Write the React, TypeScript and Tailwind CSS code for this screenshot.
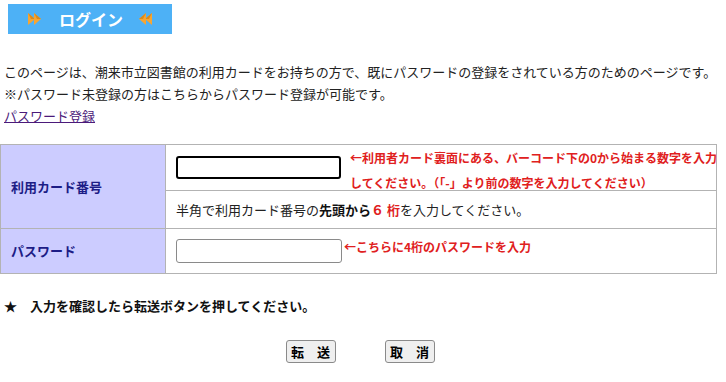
function Arrows({ dir }: { dir: "right" | "left" }) {
  const flip = dir === "left" ? "scale(-1,1) translate(-16,0)" : undefined;
  return (
    <svg width="16" height="14" viewBox="0 0 16 14" className="block">
      <g transform={flip}>
        <polygon points="1,1 8,7 1,13" fill="#f7a531" />
        <polygon points="1,1 8,7 4,7" fill="#d98a1c" />
        <polygon points="7,1 14,7 7,13" fill="#f7a531" />
        <polygon points="7,1 14,7 10,7" fill="#d98a1c" />
      </g>
    </svg>
  );
}

export default function App() {
  return (
    <div className="w-[726px] h-[382px] bg-white text-[13px] text-[#222] font-['Noto_Sans_CJK_JP','Noto_Sans',sans-serif] overflow-hidden">
      <div className="ml-[8px] mt-[4px] w-[164px] h-[30px] bg-[#4db1f6] flex items-center">
        <div className="ml-[19px]"><Arrows dir="right" /></div>
        <span className="ml-[16px] text-white font-bold text-[16px] leading-none">ログイン</span>
        <div className="ml-[14px]"><Arrows dir="left" /></div>
      </div>

      <div className="mt-[27px] pl-[4px] leading-[22px]">
        <p>このページは、潮来市立図書館の利用カードをお持ちの方で、既にパスワードの登録をされている方のためのページです。</p>
        <p>※パスワード未登録の方はこちらからパスワード登録が可能です。</p>
        <p><a href="#" className="text-[#4b1a7a] underline">パスワード登録</a></p>
      </div>

      <table className="mt-[17px] w-[717px] border-collapse border border-[#b3b3b3]">
        <tbody>
          <tr>
            <td rowSpan={2} className="w-[165px] bg-[#ccccff] border border-[#b3b3b3] pl-[10px] font-bold text-[#1c1c86] align-middle">
              利用カード番号
            </td>
            <td className="h-[46px] border border-[#b3b3b3] pl-[10px] pr-0 align-top">
              <div className="flex items-start h-[45px]">
                <input type="text" className="mt-[11px] w-[165px] h-[23px] border-2 border-black rounded-[3px] outline-none shrink-0" />
                <span className="ml-[9px] mr-[-8px] text-[#e02020] font-bold text-[12px] leading-[25px] whitespace-pre-line">
                  {"←利用者カード裏面にある、バーコード下の0から始まる数字を入力\nしてください。（「-」より前の数字を入力してください）"}
                </span>
              </div>
            </td>
          </tr>
          <tr>
            <td className="h-[38px] border border-[#b3b3b3] pl-[10px] align-middle">
              半角で利用カード番号の<b className="text-[#111]">先頭から</b><b className="text-[#e02020]">６ 桁</b>を入力してください。
            </td>
          </tr>
          <tr>
            <td className="h-[45px] bg-[#ccccff] border border-[#b3b3b3] pl-[10px] font-bold text-[#1c1c86] align-middle">
              パスワード
            </td>
            <td className="border border-[#b3b3b3] pl-[10px] align-top">
              <div className="flex items-start pt-[10px]">
                <input type="password" className="w-[166px] h-[24px] border border-[#8a8a8a] rounded-[3px] outline-none shrink-0" />
                <span className="ml-[2px] text-[#e02020] font-bold text-[12px] leading-[16px]">←こちらに4桁のパスワードを入力</span>
              </div>
            </td>
          </tr>
        </tbody>
      </table>

      <p className="mt-[23px] pl-[4px] font-bold leading-[18px] text-[#111]">★　入力を確認したら転送ボタンを押してください。</p>

      <div className="mt-[25px] flex justify-center gap-[49px] pr-[6px]">
        <button className="w-[50px] h-[23px] bg-[#efefef] border border-[#8a8a8a] rounded-[3px] font-bold text-[13px] text-black leading-none">転　送</button>
        <button className="w-[50px] h-[23px] bg-[#efefef] border border-[#8a8a8a] rounded-[3px] font-bold text-[13px] text-black leading-none">取　消</button>
      </div>
    </div>
  );
}
